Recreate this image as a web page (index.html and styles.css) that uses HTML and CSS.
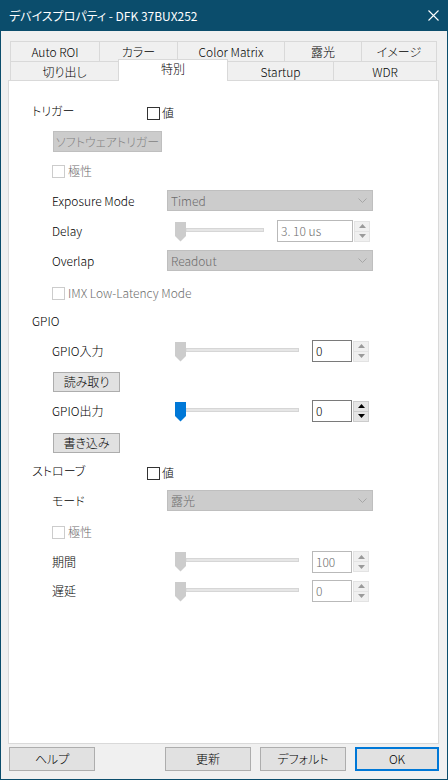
FILE: index.html
```html
<!DOCTYPE html>
<html lang="ja">
<head>
<meta charset="utf-8">
<title>デバイスプロパティ</title>
<link rel="stylesheet" href="styles.css">
</head>
<body>
<div class="window">
  <div class="titlebar">
    <span class="title">デバイスプロパティ - DFK 37BUX252</span>
    <svg class="close" width="11" height="11" viewBox="0 0 11 11"><path d="M0.5 0.5 L10.5 10.5 M10.5 0.5 L0.5 10.5" stroke="#fff" stroke-width="1.1" fill="none"/></svg>
  </div>
  <div class="body">
    <div class="tabs">
      <div class="tabrow r1">
        <div class="tab w89">Auto ROI</div>
        <div class="tab w78">カラー</div>
        <div class="tab w107">Color Matrix</div>
        <div class="tab w77">露光</div>
        <div class="tab w76 last">イメージ</div>
      </div>
      <div class="tabrow r2">
        <div class="tab w108">切り出し</div>
        <div class="tab w110 sel">特別</div>
        <div class="tab w106">Startup</div>
        <div class="tab w104 last">WDR</div>
      </div>
    </div>
    <div class="panel">
      <div class="row sec m26 h13">
        <span class="label up">トリガー</span>
        <span class="cb"></span><span class="cbtext">値</span>
      </div>
      <div class="row sub m11 h21">
        <span class="btn dis wide">ソフトウェアトリガー</span>
      </div>
      <div class="row sub m13 h13">
        <span class="cb dis"></span><span class="cbtext dis">極性</span>
      </div>
      <div class="row sub m12 h21">
        <span class="label">Exposure Mode</span>
        <div class="combo"><span>Timed</span><svg width="9" height="5" viewBox="0 0 9 5"><path d="M0.5 0.5 L4.5 4.5 L8.5 0.5" stroke="#a6a6a6" fill="none"/></svg></div>
      </div>
      <div class="row sub m9 h22">
        <span class="label">Delay</span>
        <svg class="slider" width="89" height="20" viewBox="0 0 89 20"><rect x="11" y="6.5" width="77.5" height="3" fill="#e6e6e6" stroke="#d6d6d6"/><path d="M0 0 H11 V14 L5.5 19.5 L0 14 Z" fill="#cccccc"/></svg>
        <span class="edit dis w76e">3. 10 us</span>
        <div class="spin dis"><span class="up"><svg width="7" height="4" viewBox="0 0 7 4"><path d="M0 4 L3.5 0 L7 4 Z"/></svg></span><span class="dn"><svg width="7" height="4" viewBox="0 0 7 4"><path d="M0 0 L3.5 4 L7 0 Z"/></svg></span></div>
      </div>
      <div class="row sub m8 h21">
        <span class="label">Overlap</span>
        <div class="combo"><span>Readout</span><svg width="9" height="5" viewBox="0 0 9 5"><path d="M0.5 0.5 L4.5 4.5 L8.5 0.5" stroke="#a6a6a6" fill="none"/></svg></div>
      </div>
      <div class="row sub m16 h13">
        <span class="cb dis"></span><span class="cbtext dis">IMX Low-Latency Mode</span>
      </div>
      <div class="row sec m14 h14">
        <span class="label">GPIO</span>
      </div>
      <div class="row sub m12 h22">
        <span class="label">GPIO入力</span>
        <svg class="slider" width="124" height="20" viewBox="0 0 124 20"><rect x="11" y="6.5" width="112.5" height="3" fill="#e6e6e6" stroke="#d6d6d6"/><path d="M0 0 H11 V14 L5.5 19.5 L0 14 Z" fill="#cccccc"/></svg>
        <span class="edit w40e">0</span>
        <div class="spin dis"><span class="up"><svg width="7" height="4" viewBox="0 0 7 4"><path d="M0 4 L3.5 0 L7 4 Z"/></svg></span><span class="dn"><svg width="7" height="4" viewBox="0 0 7 4"><path d="M0 0 L3.5 4 L7 0 Z"/></svg></span></div>
      </div>
      <div class="row sub m9 h21">
        <span class="btn narrow">読み取り</span>
      </div>
      <div class="row sub m8 h22">
        <span class="label">GPIO出力</span>
        <svg class="slider" width="124" height="20" viewBox="0 0 124 20"><rect x="11" y="6.5" width="112.5" height="3" fill="#e6e6e6" stroke="#d6d6d6"/><path d="M0 0 H11 V14 L5.5 19.5 L0 14 Z" fill="#0078d7"/></svg>
        <span class="edit w40e">0</span>
        <div class="spin"><span class="up"><svg width="7" height="4" viewBox="0 0 7 4"><path d="M0 4 L3.5 0 L7 4 Z"/></svg></span><span class="dn"><svg width="7" height="4" viewBox="0 0 7 4"><path d="M0 0 L3.5 4 L7 0 Z"/></svg></span></div>
      </div>
      <div class="row sub m10 h21">
        <span class="btn narrow">書き込み</span>
      </div>
      <div class="row sec m14 h13">
        <span class="label up">ストローブ</span>
        <span class="cb"></span><span class="cbtext">値</span>
      </div>
      <div class="row sub m10 h21">
        <span class="label">モード</span>
        <div class="combo"><span>露光</span><svg width="9" height="5" viewBox="0 0 9 5"><path d="M0.5 0.5 L4.5 4.5 L8.5 0.5" stroke="#a6a6a6" fill="none"/></svg></div>
      </div>
      <div class="row sub m15 h13">
        <span class="cb dis"></span><span class="cbtext dis">極性</span>
      </div>
      <div class="row sub m12 h21">
        <span class="label">期間</span>
        <svg class="slider" width="124" height="20" viewBox="0 0 124 20"><rect x="11" y="6.5" width="112.5" height="3" fill="#e6e6e6" stroke="#d6d6d6"/><path d="M0 0 H11 V14 L5.5 19.5 L0 14 Z" fill="#cccccc"/></svg>
        <span class="edit dis w40e">100</span>
        <div class="spin dis"><span class="up"><svg width="7" height="4" viewBox="0 0 7 4"><path d="M0 4 L3.5 0 L7 4 Z"/></svg></span><span class="dn"><svg width="7" height="4" viewBox="0 0 7 4"><path d="M0 0 L3.5 4 L7 0 Z"/></svg></span></div>
      </div>
      <div class="row sub m8 h22">
        <span class="label">遅延</span>
        <svg class="slider" width="124" height="20" viewBox="0 0 124 20"><rect x="11" y="6.5" width="112.5" height="3" fill="#e6e6e6" stroke="#d6d6d6"/><path d="M0 0 H11 V14 L5.5 19.5 L0 14 Z" fill="#cccccc"/></svg>
        <span class="edit dis w40e">0</span>
        <div class="spin dis"><span class="up"><svg width="7" height="4" viewBox="0 0 7 4"><path d="M0 4 L3.5 0 L7 4 Z"/></svg></span><span class="dn"><svg width="7" height="4" viewBox="0 0 7 4"><path d="M0 0 L3.5 4 L7 0 Z"/></svg></span></div>
      </div>
    </div>
    <div class="footer">
      <span class="fbtn help">ヘルプ</span>
      <span class="fbtn push">更新</span>
      <span class="fbtn">デフォルト</span>
      <span class="fbtn ok">OK</span>
    </div>
  </div>
</div>
</body>
</html>
```
FILE: styles.css
```css
* { box-sizing: border-box; }
html, body { margin: 0; padding: 0; }
body {
  width: 448px;
  height: 780px;
  overflow: hidden;
  background: #f0f0f0;
  color: #000;
  font-family: "Noto Sans CJK JP", "Noto Sans", sans-serif;
  font-size: 12px;
  font-weight: 300;
  line-height: 14px;
  font-feature-settings: "palt" 1;
}
.window { display: flex; flex-direction: column; height: 780px; }
.titlebar {
  height: 31px;
  flex: none;
  background: #0b4d6c;
  color: #fff;
  display: flex;
  align-items: center;
  padding: 0 9px 0 9px;
}
.title { flex: 1; font-size: 12px; font-weight: 400; }
.close { flex: none; margin-right: 0; }
.body {
  flex: 1;
  border: 1px solid #0b4d6c;
  border-top: 0;
  padding: 10px 8px 0 7px;
  display: flex;
  flex-direction: column;
}
.tabs { margin-left: 2px; width: 427px; }
.tabrow { display: flex; }
.tabrow.r1 { height: 20px; }
.tabrow.r2 { height: 19px; }
.tab {
  border: 1px solid #d9d9d9;
  border-right: 0;
  border-bottom: 0;
  background: #f0f0f0;
  display: flex;
  align-items: center;
  justify-content: center;
  padding-top: 1px;
}
.tab.last { border-right: 1px solid #d9d9d9; }
.tab.sel {
  background: #fff;
  height: 22px;
  margin-top: -2px;
  margin-right: -1px;
  border-right: 1px solid #d9d9d9;
  position: relative;
  z-index: 1;
  padding-top: 0;
  padding-bottom: 3px;
}
.w89 { width: 89px; } .w78 { width: 78px; } .w107 { width: 107px; }
.w77 { width: 77px; } .w76 { width: 76px; } .w108 { width: 108px; }
.w110 { width: 110px; } .w106 { width: 106px; } .w104 { width: 104px; }

.panel {
  width: 431px;
  height: 664px;
  border: 1px solid #d9d9d9;
  background: #fff;
}
.row { display: flex; align-items: center; }
.row.sec { padding-left: 23px; }
.row.sub { padding-left: 43px; }
.h13 { height: 13px; } .h14 { height: 14px; } .h21 { height: 21px; } .h22 { height: 22px; }
.m8 { margin-top: 8px; } .m9 { margin-top: 9px; } .m10 { margin-top: 10px; }
.m11 { margin-top: 11px; } .m12 { margin-top: 12px; } .m13 { margin-top: 13px; }
.m14 { margin-top: 14px; } .m15 { margin-top: 15px; } .m16 { margin-top: 16px; }
.m26 { margin-top: 26px; }
.label { width: 115px; flex: none; }
.label.up { margin-top: -5px; }
.cb {
  width: 13px; height: 13px; flex: none;
  border: 1px solid #333;
  background: #fff;
}
.cb.dis { border-color: #cccccc; }
.cbtext { margin-left: 2px; margin-top: -2px; }
.cbtext.dis { margin-left: 3px; color: #6d6d6d; }
.btn {
  height: 21px;
  margin-left: 1px;
  border: 1px solid #adadad;
  background: #e1e1e1;
  display: flex;
  align-items: center;
  justify-content: center;
}
.btn.dis { background: #cccccc; border-color: #bfbfbf; color: #838383; }
.btn.wide { width: 109px; }
.btn.narrow { width: 67px; height: 20px; }
.combo {
  width: 206px; height: 21px;
  background: #cccccc;
  border: 1px solid #bfbfbf;
  color: #6d6d6d;
  display: flex;
  align-items: center;
  justify-content: space-between;
  padding: 0 5px 0 3px;
}
.combo svg { display: block; }
.slider { display: block; flex: none; margin-left: 8px; margin-top: 1px; }
.edit {
  height: 22px;
  border: 1px solid #7a7a7a;
  background: #fff;
  display: flex;
  align-items: center;
  padding-left: 3px;
  margin-left: 13px;
}
.edit.dis { border-color: #b9b9b9; color: #6d6d6d; }
.w40e { width: 40px; }
.w76e { width: 76px; }
.spin {
  width: 16px; height: 21px;
  margin-left: 1px;
  display: flex;
  flex-direction: column;
}
.spin span {
  flex: 1;
  display: flex;
  align-items: center;
  justify-content: center;
  background: #e5e5e5;
  border: 1px solid #cccccc;
}
.spin span + span { border-top: 0; }
.spin svg { display: block; fill: #000; }
.spin.dis span { background: #f0f0f0; border-color: #e3e3e3; }
.spin.dis svg { fill: #9a9a9a; }

.footer { display: flex; margin-top: 3px; }
.fbtn {
  width: 86px; height: 24px;
  border: 1px solid #adadad;
  background: #e1e1e1;
  display: flex;
  align-items: center;
  justify-content: center;
  margin-left: 9px;
}
.fbtn.help { margin-left: 1px; }
.fbtn.push { margin-left: auto; }
.fbtn.ok { width: 84px; border: 2px solid #0078d7; }
```
